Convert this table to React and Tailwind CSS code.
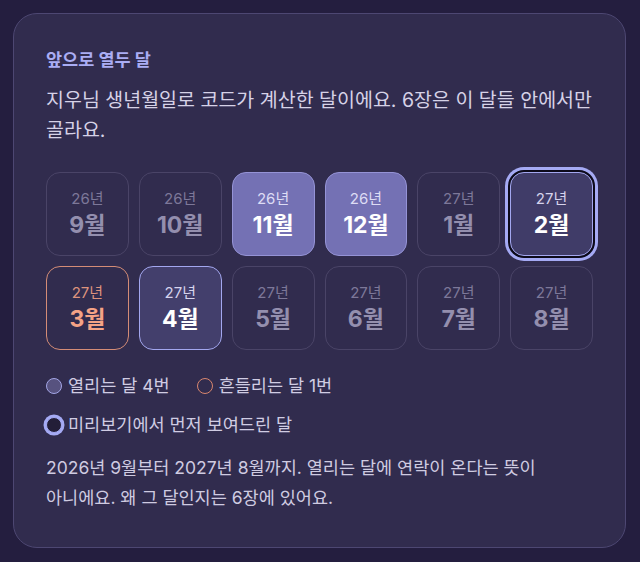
import React from "react";

const months = [
  { y: "26년", m: "9월", s: "off" },
  { y: "26년", m: "10월", s: "off" },
  { y: "26년", m: "11월", s: "open" },
  { y: "26년", m: "12월", s: "open" },
  { y: "27년", m: "1월", s: "off" },
  { y: "27년", m: "2월", s: "preview" },
  { y: "27년", m: "3월", s: "shake" },
  { y: "27년", m: "4월", s: "open2" },
  { y: "27년", m: "5월", s: "off" },
  { y: "27년", m: "6월", s: "off" },
  { y: "27년", m: "7월", s: "off" },
  { y: "27년", m: "8월", s: "off" },
];

function Tile({ y, m, s }) {
  let box = "border-[#4a4467]";
  let yc = "text-[#7d7899]";
  let mc = "text-[#948fae]";
  if (s === "open") {
    box = "border-[#9593d6] bg-[#7471b4]";
    yc = "text-[#dddcf4]";
    mc = "text-white";
  } else if (s === "open2") {
    box = "border-[#a3a7ef] bg-[#433f6c]";
    yc = "text-[#d5d3ec]";
    mc = "text-white";
  } else if (s === "shake") {
    box = "border-[#d48c76]";
    yc = "text-[#dd937d]";
    mc = "text-[#f5a386]";
  } else if (s === "preview") {
    box =
      "border-[#a3a7ef] bg-[#403c68] shadow-[0_0_0_2px_#0c0a1a,0_0_0_5px_#a5aaf4]";
    yc = "text-[#d5d3ec]";
    mc = "text-white";
  }
  return (
    <div
      className={`h-[84px] rounded-[14px] border flex flex-col items-center justify-center ${box}`}
    >
      <div className={`text-[15px] leading-[18px] ${yc}`}>{y}</div>
      <div className={`text-[23px] leading-[28px] font-bold mt-[3px] ${mc}`}>{m}</div>
    </div>
  );
}

export default function App() {
  return (
    <div
      className="w-[640px] h-[562px] bg-[#241e3f] p-[13px] pr-[14px] break-keep"
      style={{ fontFamily: 'Inter, "Noto Sans CJK KR", sans-serif' }}
    >
      <div className="h-[535px] rounded-[24px] border border-[#4d4772] bg-[#312c4e] p-8">
        <div className="text-[17.5px] leading-[28px] font-bold text-[#aaadf4]">앞으로 열두 달</div>
        <p className="mt-[11px] text-[19.5px] leading-[30px] text-[#d6d2e7]">
          지우님 생년월일로 코드가 계산한 달이에요. 6장은 이 달들 안에서만 골라요.
        </p>
        <div className="mt-[27px] grid grid-cols-6 gap-[10px]">
          {months.map((t) => (
            <Tile key={t.y + t.m} {...t} />
          ))}
        </div>
        <div className="mt-[24px] flex items-center h-6 text-[17.5px] text-[#d0cce3]">
          <span className="w-4 h-4 rounded-full border-[1.5px] border-[#a3a6e6] bg-[#57527f]" />
          <span className="ml-[6px]">열리는 달 4번</span>
          <span className="ml-[27px] w-4 h-4 rounded-full border-[1.5px] border-[#d8866e]" />
          <span className="ml-[6px]">흔들리는 달 1번</span>
        </div>
        <div className="mt-[15px] flex items-center h-6 text-[17.5px] text-[#d0cce3]">
          <span className="w-4 h-4 rounded-full border-[1.5px] border-[#a5aaf4] bg-[#231e38] shadow-[0_0_0_2.5px_#a5aaf4]" />
          <span className="ml-[6px]">미리보기에서 먼저 보여드린 달</span>
        </div>
        <p className="mt-4 max-w-[520px] text-[17.5px] leading-[30px] text-[#cfcbe1]">
          2026년 9월부터 2027년 8월까지. 열리는 달에 연락이 온다는 뜻이 아니에요. 왜 그 달인지는 6장에 있어요.
        </p>
      </div>
    </div>
  );
}
